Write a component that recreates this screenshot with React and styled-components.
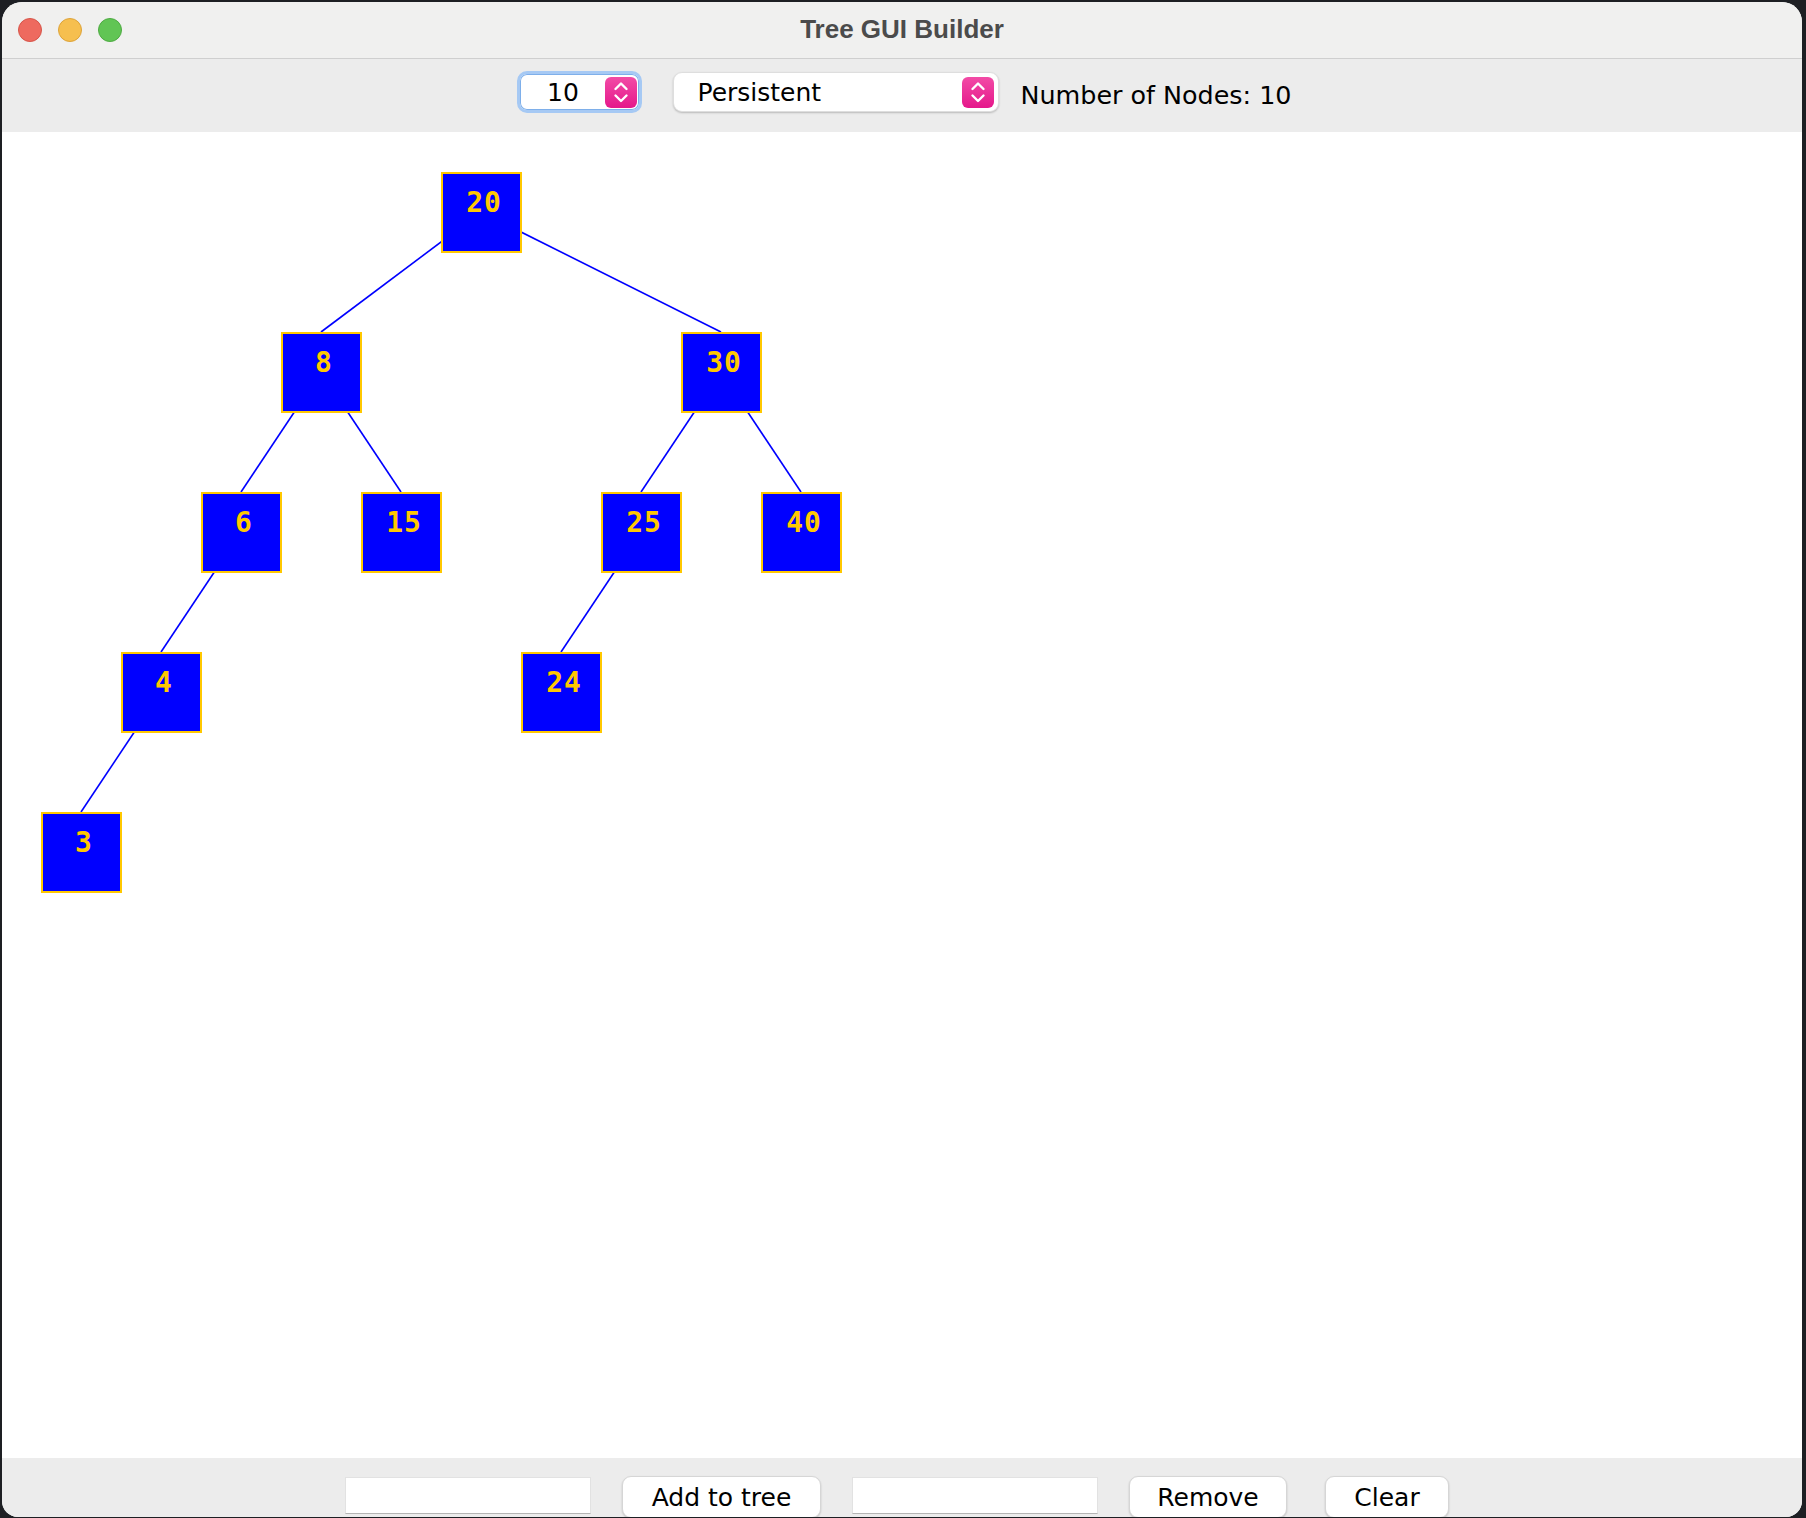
import React from "react";
import styled, { createGlobalStyle } from "styled-components";

const GlobalStyle = createGlobalStyle`
  html, body {
    margin: 0;
    padding: 0;
  }
  body {
    width: 1806px;
    height: 1518px;
    overflow: hidden;
    background: #1d1f23;
    font-family: "DejaVu Sans", "Liberation Sans", sans-serif;
  }
`;

// in-order list of the tree, with depth and parent
const NODES = [
  { value: 3, depth: 4, parent: 4 },
  { value: 4, depth: 3, parent: 6 },
  { value: 6, depth: 2, parent: 8 },
  { value: 8, depth: 1, parent: 20 },
  { value: 15, depth: 2, parent: 8 },
  { value: 20, depth: 0, parent: null },
  { value: 24, depth: 3, parent: 25 },
  { value: 25, depth: 2, parent: 30 },
  { value: 30, depth: 1, parent: 20 },
  { value: 40, depth: 2, parent: 30 },
];

const NODE_SIZE = 81;
const placed = NODES.map((n, i) => ({
  ...n,
  x: 39 + 80 * i,
  y: 40 + 160 * n.depth,
}));
const byValue = Object.fromEntries(placed.map((n) => [n.value, n]));

export default function App() {
  return (
    <>
      <GlobalStyle />
      <Window>
        <TitleBar>
          <Lights>
            <Light $color="#ee6a5f" $edge="#d65549" />
            <Light $color="#f6bf4f" $edge="#dda33a" />
            <Light $color="#61c554" $edge="#4eaa42" />
          </Lights>
          <Title>Tree GUI Builder</Title>
          <span />
        </TitleBar>

        <Toolbar>
          <Spinner>
            <SpinnerValue>10</SpinnerValue>
            <Stepper />
          </Spinner>
          <Combo>
            <ComboText>Persistent</ComboText>
            <Stepper />
          </Combo>
          <CountLabel>Number of Nodes: 10</CountLabel>
        </Toolbar>

        <Canvas>
          <Edges>
            {placed
              .filter((n) => n.parent !== null)
              .map((n) => {
                const p = byValue[n.parent];
                return (
                  <line
                    key={n.value}
                    x1={p.x + 40}
                    y1={p.y + 40}
                    x2={n.x + 40}
                    y2={n.y}
                    stroke="#0000ff"
                    strokeWidth="1.6"
                  />
                );
              })}
          </Edges>
          {placed.map((n) => (
            <TreeNode key={n.value} $x={n.x} $y={n.y}>
              {n.value}
            </TreeNode>
          ))}
        </Canvas>

        <BottomBar>
          <Field />
          <Button $w={199}>Add to tree</Button>
          <Field />
          <Button $w={158}>Remove</Button>
          <Button $w={124} $gapLeft={7}>Clear</Button>
        </BottomBar>
      </Window>
    </>
  );
}

function Stepper() {
  return (
    <StepperBox>
      <svg width="32" height="31" viewBox="0 0 32 31">
        <polyline
          points="10.5,12 16,6.5 21.5,12"
          fill="none"
          stroke="#fff"
          strokeWidth="2.4"
          strokeLinecap="round"
          strokeLinejoin="round"
        />
        <polyline
          points="10.5,18.5 16,24 21.5,18.5"
          fill="none"
          stroke="#fff"
          strokeWidth="2.4"
          strokeLinecap="round"
          strokeLinejoin="round"
        />
      </svg>
    </StepperBox>
  );
}

const Window = styled.div`
  margin: 2px 4px 1px 2px;
  width: 1800px;
  height: 1515px;
  display: flex;
  flex-direction: column;
  border-radius: 20px 20px 16px 16px;
  overflow: hidden;
  background: #ececec;
`;

const TitleBar = styled.div`
  height: 56px;
  flex-shrink: 0;
  display: grid;
  grid-template-columns: 1fr auto 1fr;
  align-items: center;
  background: #f0f0ef;
  border-bottom: 1px solid #cfcfcf;
`;

const Lights = styled.div`
  display: flex;
  gap: 16px;
  padding-left: 16px;
`;

const Light = styled.span`
  width: 24px;
  height: 24px;
  box-sizing: border-box;
  border-radius: 50%;
  background: ${(p) => p.$color};
  border: 1px solid ${(p) => p.$edge};
`;

const Title = styled.div`
  font-family: "Liberation Sans", Arial, sans-serif;
  font-weight: bold;
  font-size: 26px;
  color: #4b4b4b;
  margin-top: -1px;
`;

const Toolbar = styled.div`
  height: 73px;
  flex-shrink: 0;
  box-sizing: border-box;
  padding: 12px 0 0 5px;
  display: flex;
  justify-content: center;
  align-items: flex-start;
  background: #ececec;
`;

const Spinner = styled.div`
  width: 125px;
  height: 42px;
  box-sizing: border-box;
  margin-right: 31px;
  display: flex;
  align-items: center;
  background: #fff;
  border: 3px solid #a6c9f4;
  border-radius: 10px;
  box-shadow: inset 0 0 0 1px #7eafea;
  padding-right: 2px;
`;

const SpinnerValue = styled.span`
  flex: 1;
  text-align: center;
  font-size: 25px;
  color: #000;
  margin-top: 1px;
`;

const StepperBox = styled.span`
  width: 32px;
  height: 31px;
  display: flex;
  border-radius: 6px;
  background: linear-gradient(#f24ba6, #e5188b);
  flex-shrink: 0;
`;

const Combo = styled.div`
  width: 326px;
  height: 40px;
  box-sizing: border-box;
  margin-top: 1px;
  margin-right: 21px;
  padding: 0 4px 0 23px;
  display: flex;
  align-items: center;
  background: #fff;
  border: 1px solid #dedede;
  border-radius: 9px;
  box-shadow: 0 1px 2px rgba(0, 0, 0, 0.22);
`;

const ComboText = styled.span`
  flex: 1;
  font-size: 25px;
  color: #000;
  margin-top: 1px;
`;

const CountLabel = styled.span`
  font-size: 25.4px;
  color: #000;
  line-height: 42px;
  margin-top: 3px;
`;

const Canvas = styled.div`
  position: relative;
  flex: 1;
  background: #fff;
`;

const Edges = styled.svg`
  position: absolute;
  inset: 0;
  width: 100%;
  height: 100%;
`;

const TreeNode = styled.div.attrs((p) => ({
  style: { left: p.$x, top: p.$y },
}))`
  position: absolute;
  width: ${NODE_SIZE}px;
  height: ${NODE_SIZE}px;
  box-sizing: border-box;
  background: #0000ff;
  border: 2px solid #ffc800;
  padding: 15px 0 0 5px;
  text-align: center;
  font-family: "DejaVu Sans Mono", "Liberation Mono", monospace;
  font-weight: bold;
  font-size: 28px;
  line-height: 28px;
  letter-spacing: 1px;
  color: #ffc800;
`;

const BottomBar = styled.div`
  height: 59px;
  flex-shrink: 0;
  box-sizing: border-box;
  padding: 18px 10px 0 0;
  display: flex;
  justify-content: center;
  align-items: flex-start;
  gap: 31px;
  background: #ececec;
`;

const Field = styled.div`
  width: 246px;
  height: 37px;
  box-sizing: border-box;
  margin-top: 1px;
  background: #fff;
  border: 1px solid #e2e2e2;
  border-bottom-color: #b4b4b4;
`;

const Button = styled.div`
  width: ${(p) => p.$w}px;
  height: 42px;
  box-sizing: border-box;
  margin-left: ${(p) => p.$gapLeft || 0}px;
  display: flex;
  align-items: center;
  justify-content: center;
  background: #fff;
  border: 1px solid #d6d6d6;
  border-radius: 9px;
  box-shadow: 0 1px 2px rgba(0, 0, 0, 0.18);
  font-size: 25px;
  color: #000;
`;
